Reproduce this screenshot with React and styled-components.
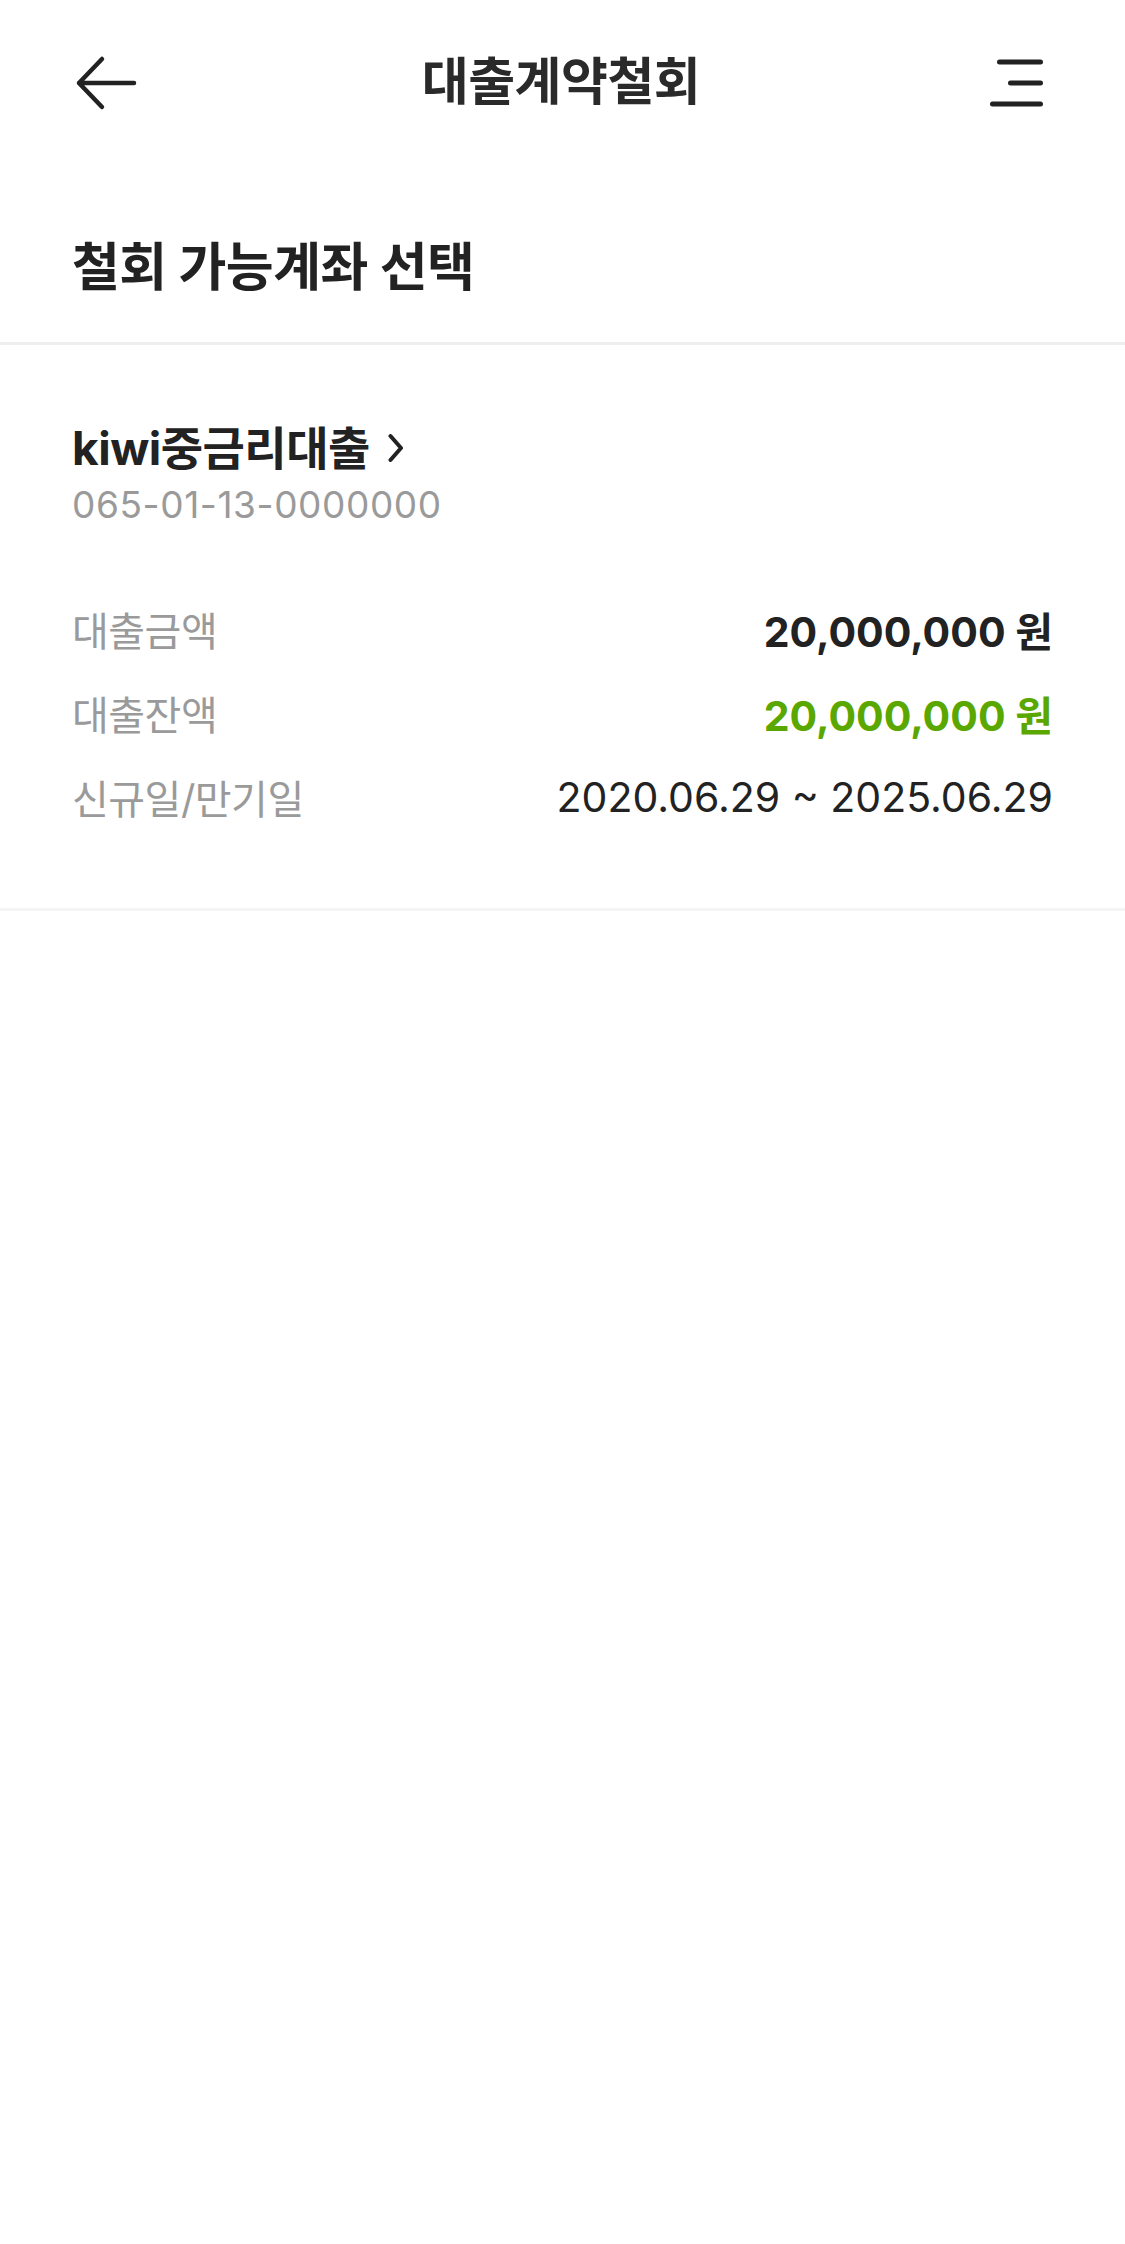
import styled, { createGlobalStyle } from "styled-components";

const GlobalStyle = createGlobalStyle`
  html, body {
    margin: 0;
    padding: 0;
    background: #ffffff;
  }
  body {
    font-family: Inter, "Noto Sans CJK KR", "Noto Sans", sans-serif;
    color: #222222;
  }
`;

const Page = styled.div`
  width: 1125px;
  min-height: 2244px;
  background: #ffffff;
`;

const Header = styled.header`
  height: 166px;
  display: flex;
  align-items: center;
  justify-content: space-between;
  padding: 0 77px 0 74px;
`;

const IconButton = styled.button`
  width: 64px;
  height: 64px;
  padding: 0;
  border: 0;
  background: none;
  display: flex;
  align-items: center;
  justify-content: center;
  cursor: pointer;
`;

const Title = styled.h1`
  margin: 0 0 2px;
  font-size: 51px;
  line-height: 64px;
  font-weight: 700;
  letter-spacing: -0.5px;
  color: #2a2a2a;
`;

const SectionHead = styled.div`
  padding: 68px 72px 41px;
  border-bottom: 3px solid #eeeeee;
`;

const SectionTitle = styled.h2`
  margin: 0;
  font-size: 52px;
  line-height: 67px;
  font-weight: 700;
  letter-spacing: -0.5px;
  color: #222222;
`;

const Card = styled.section`
  padding: 75px 72px 69px;
  border-bottom: 3px solid #f5f5f5;
`;

const ProductName = styled.a`
  display: inline-flex;
  align-items: center;
  gap: 18px;
  font-size: 46px;
  line-height: 56px;
  font-weight: 700;
  letter-spacing: -0.5px;
  color: #222222;
  text-decoration: none;
`;

const AccountNo = styled.div`
  margin-top: 4px;
  font-size: 37px;
  line-height: 50px;
  color: #9a9a9a;
  letter-spacing: 0.6px;
`;

const InfoList = styled.dl`
  margin: 57px 0 0;
`;

const InfoRow = styled.div`
  height: 84px;
  display: flex;
  align-items: center;
  justify-content: space-between;
`;

const Label = styled.dt`
  font-size: 40px;
  color: #9a9a9a;
  letter-spacing: -0.5px;
`;

const Value = styled.dd`
  margin: 0;
  font-size: 41px;
  font-weight: ${({ $bold }) => ($bold ? 700 : 400)};
  color: ${({ $accent }) => ($accent ? "#5aa700" : "#222222")};
`;

function BackIcon() {
  return (
    <svg width="64" height="64" viewBox="0 0 64 64" fill="none">
      <path
        d="M60 32H5M28 8L5 32L28 56"
        stroke="#222"
        strokeWidth="4.5"
        strokeLinecap="round"
        strokeLinejoin="round"
      />
    </svg>
  );
}

function MenuIcon() {
  return (
    <svg width="64" height="64" viewBox="0 0 64 64" fill="none">
      <path
        d="M15.5 11H56.5M26.5 32H56.5M8.5 53H56.5"
        stroke="#222"
        strokeWidth="5"
        strokeLinecap="round"
      />
    </svg>
  );
}

function Chevron() {
  return (
    <svg width="16" height="30" viewBox="0 0 16 30" fill="none">
      <path
        d="M2.5 3L13 15L2.5 27"
        stroke="#222"
        strokeWidth="4"
        strokeLinecap="round"
        strokeLinejoin="round"
      />
    </svg>
  );
}

const loan = {
  name: "kiwi중금리대출",
  account: "065-01-13-0000000",
  rows: [
    { label: "대출금액", value: "20,000,000 원", bold: true },
    { label: "대출잔액", value: "20,000,000 원", bold: true, accent: true },
    { label: "신규일/만기일", value: "2020.06.29 ~ 2025.06.29" },
  ],
};

export default function App() {
  return (
    <>
      <GlobalStyle />
      <Page>
        <Header>
          <IconButton aria-label="뒤로">
            <BackIcon />
          </IconButton>
          <Title>대출계약철회</Title>
          <IconButton aria-label="메뉴">
            <MenuIcon />
          </IconButton>
        </Header>

        <SectionHead>
          <SectionTitle>철회 가능계좌 선택</SectionTitle>
        </SectionHead>

        <Card>
          <ProductName href="#">
            {loan.name}
            <Chevron />
          </ProductName>
          <AccountNo>{loan.account}</AccountNo>
          <InfoList>
            {loan.rows.map((row) => (
              <InfoRow key={row.label}>
                <Label>{row.label}</Label>
                <Value $bold={row.bold} $accent={row.accent}>
                  {row.value}
                </Value>
              </InfoRow>
            ))}
          </InfoList>
        </Card>
      </Page>
    </>
  );
}
